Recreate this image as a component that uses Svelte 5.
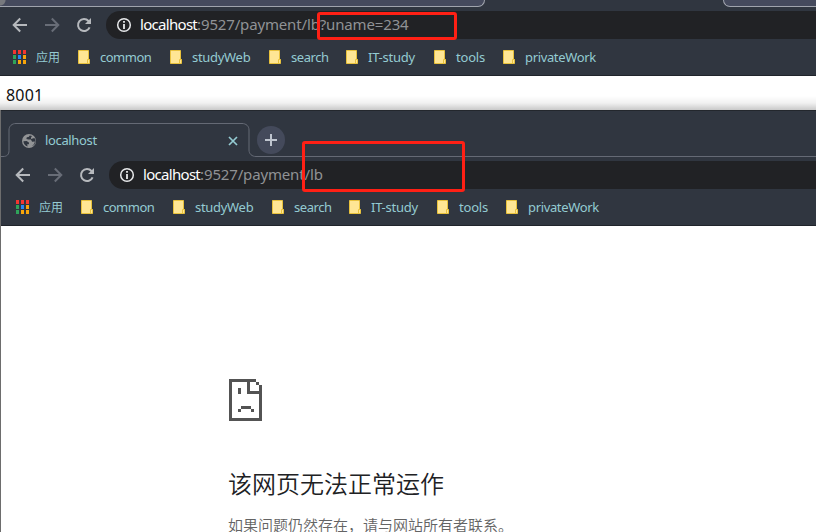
<script>
  const bookmarks = [
    { name: 'common', width: 92, spacing: -0.5 },
    { name: 'studyWeb', width: 99, spacing: -0.3 },
    { name: 'search', width: 77, spacing: -0.45 },
    { name: 'IT-study', width: 88, spacing: -0.25 },
    { name: 'tools', width: 69, spacing: -0.2 },
    { name: 'privateWork', width: 100, spacing: -0.35 },
  ];
  const dots = ['#f5362f', '#f5362f', '#f5362f', '#2fa45a', '#2487f5', '#f7a50a', '#2fa45a', '#f7a50a', '#f7a50a'];
</script>

{#snippet chrome(query)}
  <div class="toolbar">
    <svg class="nav" width="16" height="16" viewBox="0 0 16 16"><path d="M15 8H2M8.2 1.5 1.7 8l6.5 6.5" /></svg>
    <svg class="nav dim" width="16" height="16" viewBox="0 0 16 16"><path d="M1 8h13M7.8 1.5 14.3 8l-6.5 6.5" /></svg>
    <svg class="nav" width="16" height="16" viewBox="0 0 16 16"><path d="M13.6 10.3A6 6 0 1 1 12.5 4L14 5.5" /><path class="fill" d="M15 1v6H9z" /></svg>
    <div class="omnibox">
      <svg width="16" height="16" viewBox="0 0 16 16"><circle cx="8" cy="8" r="6.3" fill="none" stroke="#e8e9eb" stroke-width="1.5" /><path d="M7.1 4h1.8v1.8H7.1zM7.1 7h1.8v5H7.1z" fill="#e8e9eb" /></svg>
      <span class="url"><b>localhost</b><span>:9527/payment/lb{query}</span></span>
    </div>
  </div>
  <div class="bookmarks">
    <div class="apps">
      <div class="grid">{#each dots as c}<i style:background={c}></i>{/each}</div>
      <span>应用</span>
    </div>
    {#each bookmarks as b}
      <div class="bookmark" style:width="{b.width}px">
        <svg width="13" height="15" viewBox="0 0 13 15"><path d="M.5.5h10v9h1v4H.5z" fill="#ffe694" stroke="#e9c23c" /><path d="M9.500 13.500v-4h2" fill="none" stroke="#e9c23c" /></svg>
        <span style:letter-spacing="{b.spacing}px">{b.name}</span>
      </div>
    {/each}
  </div>
{/snippet}

<main>
  <section class="back">
    <div class="strip"><div class="left"></div><div class="right"></div></div>
    {@render chrome('?uname=234')}
    <div class="response">8001</div>
  </section>
  <section class="front">
    <div class="tabs">
      <svg class="outline" width="815" height="47" viewBox="0 0 815 47"><path d="M0 46.500h2c4 0 6-2 6-6v-20.500c0-4 3-6.500 7-6.500h226c4 0 7 2.500 7 6.500v20c0 4 3 6.500 7 6.500h560" fill="none" stroke="#656a75" /></svg>
      <div class="tab">
        <svg width="14" height="14" viewBox="0 0 14 14"><circle cx="7" cy="7" r="7" fill="#929496" /><path d="M1.400 7.200 4.700 7l2.400 1.800-.3 1.500H5.200l.4 2.100C3 11.600 1.500 9.700 1.400 7.200ZM7.800 1.400 6.600 3l-1.800.3-.4 1.800 2 .5 2.500-.2 1.200 2.300 2.700-.2c-.1 2.300-1.300 3.700-3.200 4.600 4-.6 5.100-5.700 2.700-8.200L9 5V3.500L10 2z" fill="#303640" /></svg>
        <span>localhost</span>
        <svg width="10" height="10" viewBox="0 0 10 10"><path d="m1 1 8 8M9 1 1 9" stroke="#94cbd2" stroke-width="1.700" /></svg>
      </div>
      <div class="new"><svg width="12" height="12" viewBox="0 0 12 12"><path d="M6 0v12M0 6h12" stroke="#bfc5cf" stroke-width="2" /></svg></div>
    </div>
    {@render chrome('')}
    <div class="error">
      <svg width="33" height="42" viewBox="0 0 33 42" fill="#535353" shape-rendering="crispEdges"><path d="M0 0h27v3h3v3h3v36H0zM3 3v36h27V15H18V3zM21 3v9h9V6h-3V3zM9 9h3v6H9zM12 27h10v3H12zM9 30h3v3H9zM22 30h3v3h-3z" fill-rule="evenodd" /></svg>
      <h1>该网页无法正常运作</h1>
      <p>如果问题仍然存在，请与网站所有者联系。</p>
    </div>
  </section>
  <div class="mark one"></div>
  <div class="mark two"></div>
</main>

<style>
  :global(body) { margin: 0; overflow: hidden; }
  main { position: relative; width: 816px; height: 532px; overflow: hidden; background: #fff; font-family: 'Noto Sans', 'Noto Sans CJK SC', sans-serif; }
  svg { display: block; flex: none; }
  .back { height: 110px; display: flex; flex-direction: column; background: linear-gradient(#fff 0 96px, #f1f1f1 103px, #c9c9c9 110px); }
  .strip { height: 7px; flex: none; background: #303640; display: flex; justify-content: space-between; }
  .strip div { box-sizing: border-box; height: 7px; background: #454a5d; border-bottom: 1px solid #a0a4ad; }
  .strip .left { width: 485px; border-right: 1px solid #a0a4ad; border-bottom-right-radius: 7px; background: radial-gradient(circle at 0 0, #77797e 0 5px, #454a5d 6px); }
  .right { width: 93px; border-left: 1px solid #a0a4ad; border-bottom-left-radius: 7px; }
  .toolbar { height: 36px; flex: none; box-sizing: border-box; padding: 4px 0 4px 12px; background: #303640; display: flex; align-items: center; gap: 16px; }
  .nav { fill: none; stroke: #b6b9bd; stroke-width: 2; }
  .nav.dim { stroke: #686d77; }
  .nav .fill { fill: #b6b9bd; stroke: none; }
  .omnibox { flex: 1; height: 28px; margin-left: -2px; border-radius: 14px 0 0 14px; background: #212225; display: flex; align-items: center; padding-left: 10px; gap: 8px; }
  .url { font-size: 15px; line-height: 26px; height: 28px; white-space: nowrap; color: #909295; letter-spacing: -0.15px; }
  .url b { font-weight: 400; color: #fff; letter-spacing: -0.7px; }
  .bookmarks { height: 33px; flex: none; box-sizing: border-box; border-bottom: 1px solid #20242b; padding: 0 0 4px 12px; background: #303640; display: flex; align-items: center; color: #94cbd2; font-size: 13px; line-height: 18px; white-space: nowrap; }
  .apps { width: 66px; display: flex; align-items: center; gap: 9px; font-size: 12px; }
  .apps span { padding-top: 2px; }
  .grid { display: grid; grid-template-columns: repeat(3, 3px); gap: 1px 2px; width: 14px; margin-left: 1px; }
  .grid i { height: 4px; }
  .bookmark { display: flex; align-items: center; gap: 9px; }
  .response { padding: 6px 6px 0; font-size: 16px; line-height: 26px; color: #111; letter-spacing: 0.2px; }
  .front { height: 422px; box-sizing: border-box; border-left: 1px solid #6d6d6d; background: #fff; }
  .tabs { position: relative; height: 47px; background: #303640; box-shadow: inset 0 1px #23272d; display: flex; }
  .outline { position: absolute; inset: 0; }
  .tab { width: 216px; padding: 14px 0 0 21px; height: 33px; display: flex; align-items: center; gap: 9px; color: #94cbd2; font-size: 13px; letter-spacing: -0.35px; }
  .tab span { flex: 1; padding-bottom: 2px; }
  .new { width: 28px; height: 28px; margin: 16px 0 0 19px; border-radius: 50%; background: #444a5b; display: grid; place-items: center; }
  .front .toolbar, .front .bookmarks { padding-left: 14px; }
  .error { padding: 153px 0 0 227px; }
  .error svg { margin-left: 1px; }
  h1 { margin: 43px 0 0; font-size: 24px; line-height: 40px; font-weight: 350; color: #202124; }
  p { margin: 10px 0 0; font-size: 15px; line-height: 22px; font-weight: 350; color: #646464; white-space: nowrap; }
  .mark { position: absolute; box-sizing: border-box; border: 3px solid #ff2015; border-radius: 3px; }
  .one { left: 317px; top: 12px; width: 140px; height: 28px; }
  .two { left: 302px; top: 141px; width: 163px; height: 51px; }
</style>
